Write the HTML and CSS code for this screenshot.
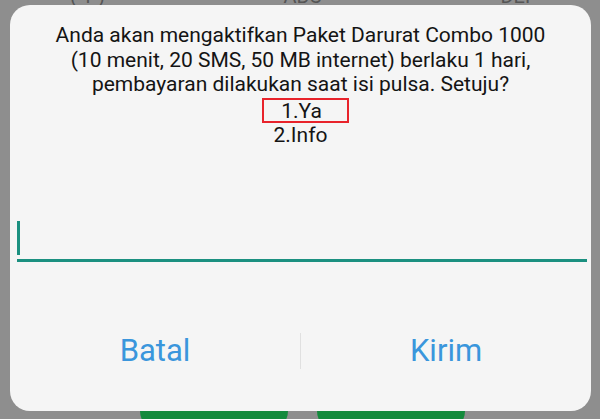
FILE: index.html
```html
<!DOCTYPE html>
<html lang="en">
<head>
    <meta charset="UTF-8">
    <title>USSD Dialog</title>
    <link rel="stylesheet" href="styles.css">
</head>
<body>

<!-- keypad behind the dialog, only the bottom of the labels shows -->
<div class="keys">
    <span>( 1 )</span>
    <span>ABC</span>
    <span>DEF</span>
</div>

<div class="dialog">
    <div class="message">
        Anda akan mengaktifkan Paket Darurat Combo 1000<br>
        (10 menit, 20 SMS, 50 MB internet) berlaku 1 hari,<br>
        pembayaran dilakukan saat isi pulsa. Setuju?<br>
        <span class="mark">1.Ya</span><br>
        2.Info
    </div>

    <div class="input">
        <div class="cursor"></div>
    </div>

    <div class="actions">
        <button class="action">Batal</button>
        <div class="divider"></div>
        <button class="action">Kirim</button>
    </div>
</div>

<div class="calls">
    <div class="call"></div>
    <div class="call"></div>
</div>

</body>
</html>
```

FILE: styles.css
```css
/* General Styles */
body {
    font-family: Roboto, "Liberation Sans", sans-serif;
    background-color: #8e8e8e;
    margin: 0;
    padding: 0;
    height: 419px;
    overflow: hidden;
}

.keys {
    height: 5px;
    overflow: hidden;
    display: flex;
    justify-content: space-between;
    padding: 0 64px 0 70px;
    color: #555;
}

.keys span {
    display: block;
    font-size: 20px;
    line-height: 20px;
    margin-top: -14px;
}

.dialog {
    background-color: #f5f5f5;
    border-radius: 20px;
    margin: 0 9px 0 10px;
    height: 406px;
    padding-top: 18px;
    box-sizing: border-box;
    display: flex;
    flex-direction: column;
}

.message {
    text-align: center;
    font-size: 21px;
    line-height: 24.5px;
    color: #141414;
}

.mark {
    display: inline-block;
    border: 2px solid #e8232b;
    width: 75px;
    height: 21px;
    padding-right: 8px;
    margin-left: 10px;
    line-height: 22px;
    vertical-align: top;
    margin-top: 1px;
}

.input {
    margin: 74px 4px 0 7px;
    height: 38px;
    border-bottom: 3px solid #1b9080;
}

.cursor {
    width: 3px;
    height: 34px;
    background-color: #1b9080;
}

.actions {
    display: flex;
    align-items: center;
    margin-top: 70px;
}

.action {
    flex: 1;
    background: none;
    border: none;
    font-family: inherit;
    font-size: 31px;
    color: #3a96dc;
    padding: 0;
}

.divider {
    width: 1px;
    height: 36px;
    background-color: #e0e0e0;
}

.calls {
    display: flex;
    gap: 29px;
    padding-left: 140px;
}

.call {
    width: 148px;
    height: 20px;
    background-color: #138a3c;
    border-radius: 0 0 40px 40px;
}
```
